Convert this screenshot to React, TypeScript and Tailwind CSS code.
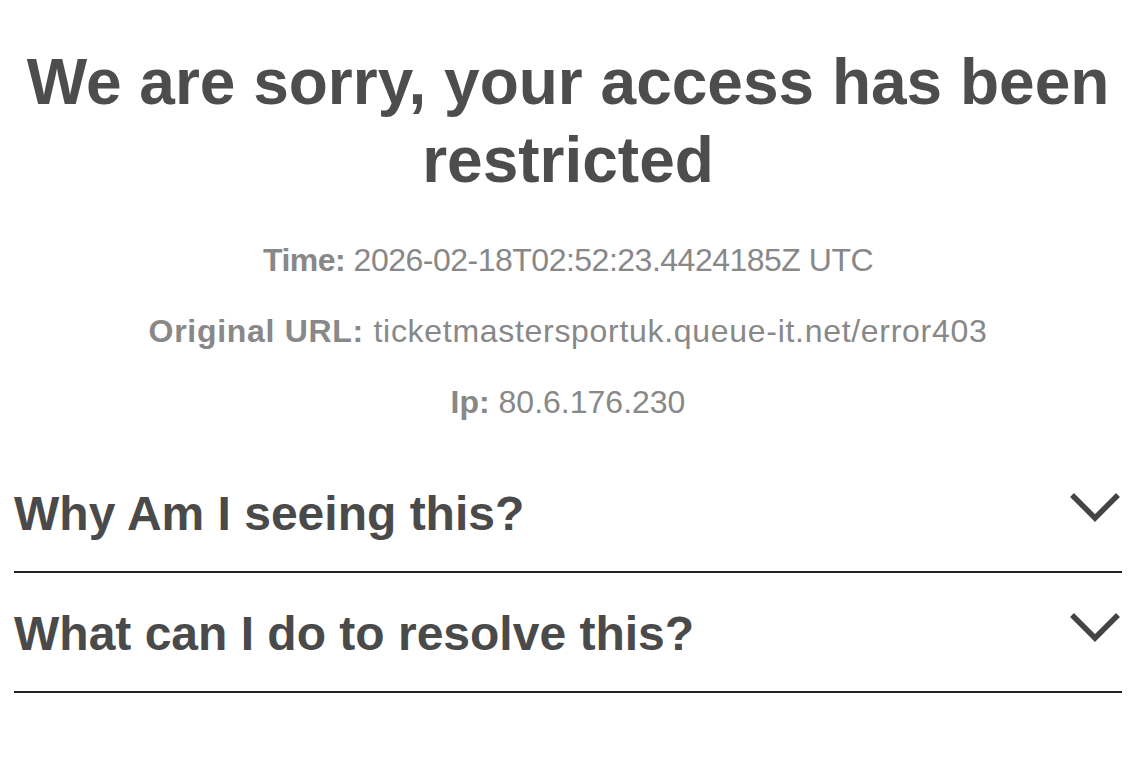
import React from 'react';

const info = [
  { label: 'Time:', value: '2026-02-18T02:52:23.4424185Z UTC', track: 'tracking-[-0.5px]' },
  { label: 'Original URL:', value: 'ticketmastersportuk.queue-it.net/error403', track: 'tracking-[0.7px]' },
  { label: 'Ip:', value: '80.6.176.230', track: 'tracking-normal' },
];

const questions = ['Why Am I seeing this?', 'What can I do to resolve this?'];

const Chevron: React.FC = () => (
  <svg width="52" height="30" viewBox="0 0 52 30" fill="none" className="shrink-0">
    <polyline points="3,3 26,26 49,3" stroke="#444444" strokeWidth="5.5" />
  </svg>
);

const App: React.FC = () => {
  return (
    <div className="w-[1136px] min-h-[770px] bg-white px-[14px] pt-[43px] font-['Liberation_Sans',Arial,sans-serif]">
      <h1 className="text-center text-[64px] leading-[78px] font-bold text-[#4d4d4d]">
        We are sorry, your access has been restricted
      </h1>
      <div className="mt-[41px] flex flex-col gap-[31px] text-center text-[32px] leading-[40px] text-[#888888]">
        {info.map((row) => (
          <p key={row.label} className={row.track}>
            <span className="font-bold">{row.label}</span> {row.value}
          </p>
        ))}
      </div>
      <div className="mt-[31px]">
        {questions.map((q) => (
          <div
            key={q}
            className="flex items-center justify-between border-b-2 border-[#222222] pt-[33px] pb-[29px]"
          >
            <h2 className="text-[48px] leading-[56px] font-bold text-[#4a4a4a]">{q}</h2>
            <div className="-mt-[14px] pr-[1px]">
              <Chevron />
            </div>
          </div>
        ))}
      </div>
    </div>
  );
};

export default App;
